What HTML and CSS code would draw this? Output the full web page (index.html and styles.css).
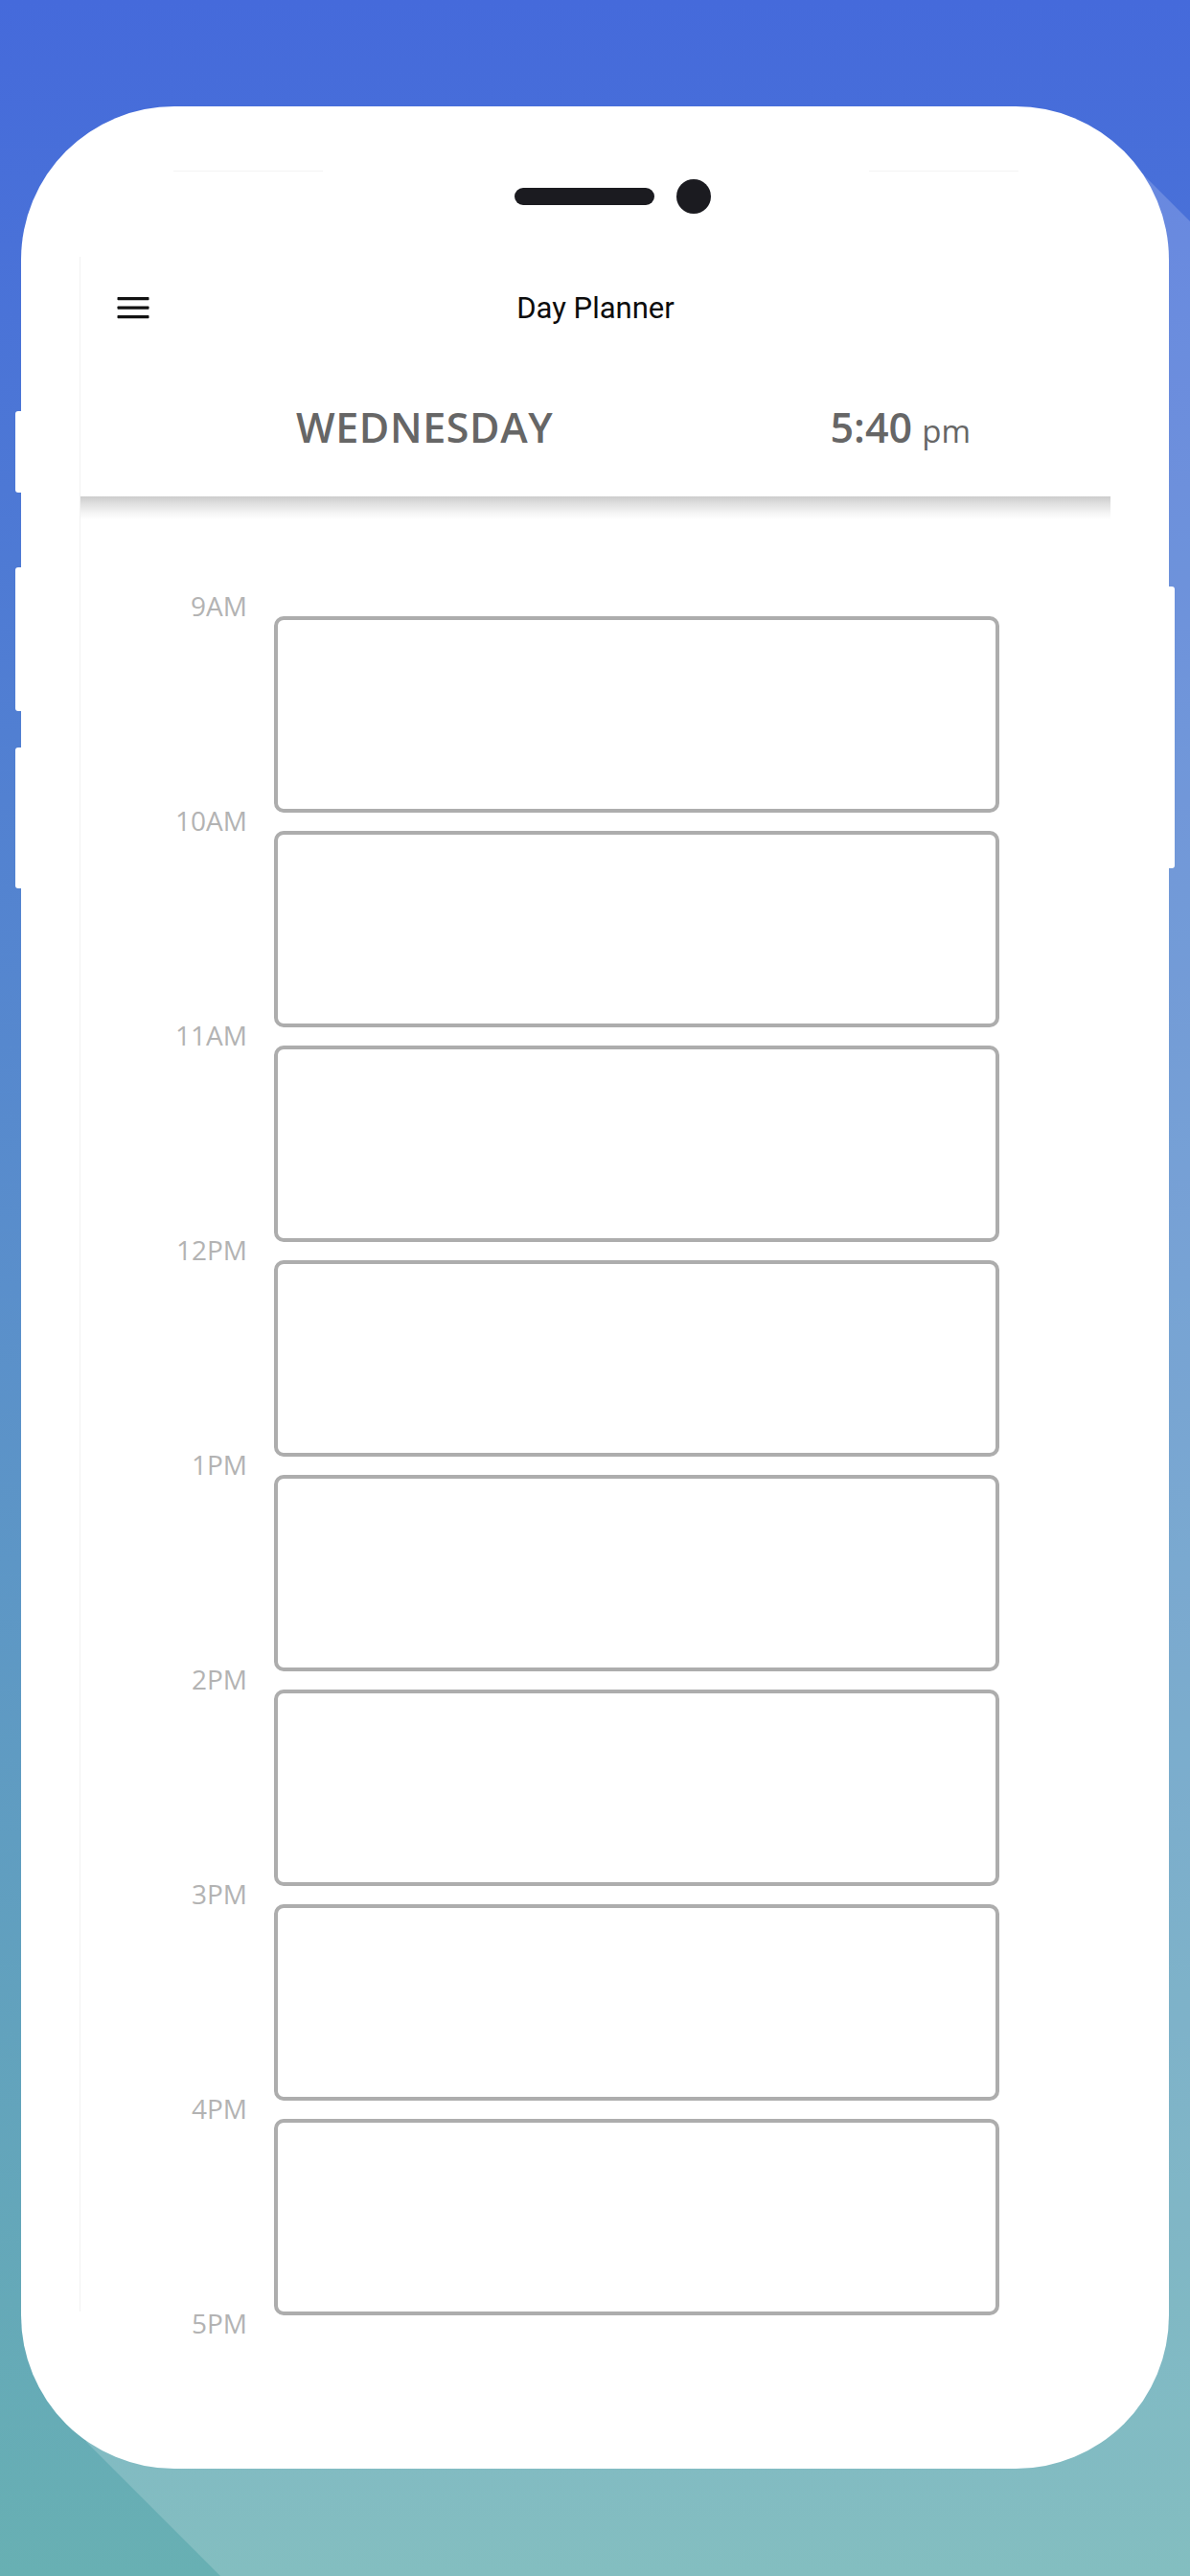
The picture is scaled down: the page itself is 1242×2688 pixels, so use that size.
FILE: index.html
```html
<!DOCTYPE html>
<html lang="en">
<head>
<meta charset="utf-8">
<title>Day Planner</title>
<link rel="stylesheet" href="styles.css">
</head>
<body>
<div class="phone">
  <span class="side-btn btn-l1"></span>
  <span class="side-btn btn-l2"></span>
  <span class="side-btn btn-l3"></span>
  <span class="side-btn btn-r1"></span>
  <div class="bezel-lines"><span></span><span></span></div>
  <div class="notch"><span class="speaker"></span><span class="camera"></span></div>
  <main class="screen">
    <header class="appbar">
      <div class="nav">
        <span class="menu">
          <svg width="34" height="24" viewBox="0 0 34 24" aria-hidden="true">
            <rect x="0.5" y="0" width="33" height="3.3" rx="0.8" fill="#111"/>
            <rect x="0.5" y="9.5" width="33" height="3.3" rx="0.8" fill="#111"/>
            <rect x="0.5" y="19" width="33" height="3.3" rx="0.8" fill="#111"/>
          </svg>
        </span>
        <h1 class="title">Day Planner</h1>
        <span class="nav-spacer"></span>
      </div>
      <div class="date-row">
        <span class="day">WEDNESDAY</span>
        <span class="time"><span class="num">5:40</span> <span class="ampm">pm</span></span>
      </div>
    </header>
    <div class="header-shadow"></div>
    <ol class="slots">
      <li class="slot"><span class="hour">9AM</span><div class="box"></div></li>
      <li class="slot"><span class="hour">10AM</span><div class="box"></div></li>
      <li class="slot"><span class="hour">11AM</span><div class="box"></div></li>
      <li class="slot"><span class="hour">12PM</span><div class="box"></div></li>
      <li class="slot"><span class="hour">1PM</span><div class="box"></div></li>
      <li class="slot"><span class="hour">2PM</span><div class="box"></div></li>
      <li class="slot"><span class="hour">3PM</span><div class="box"></div></li>
      <li class="slot"><span class="hour">4PM</span><div class="box"></div></li>
      <li class="slot"><span class="hour">5PM</span></li>
    </ol>
  </main>
</div>
</body>
</html>
```

FILE: styles.css
```css
* { box-sizing: border-box; }

html, body {
  margin: 0;
  padding: 0;
}

body {
  position: relative;
  width: 1242px;
  height: 2688px;
  overflow: hidden;
  font-family: "Open Sans", "Noto Sans", sans-serif;
  background: linear-gradient(180deg, #456adb 0%, #5a8fcb 50%, #68b0b3 100%);
}

/* lighter rotated panel behind the phone */
body::before {
  content: "";
  position: absolute;
  inset: 0;
  background: rgba(255, 255, 255, 0.18);
  clip-path: polygon(1190px 179px, 1242px 231px, 1242px 2688px, 230px 2688px, 90px 2548px);
}

.phone {
  position: relative;
  z-index: 1;
  margin: 111px 0 0 22px;
  width: 1198px;
  height: 2465px;
  padding-top: 67px;
  background: #fff;
  border-radius: 160px;
}

.side-btn {
  position: absolute;
  width: 7px;
  background: #fff;
}
.btn-l1, .btn-l2, .btn-l3 { left: -6px; border-radius: 3px 0 0 3px; }
.btn-l1 { top: 318px; height: 85px; }
.btn-l2 { top: 481px; height: 150px; }
.btn-l3 { top: 669px; height: 147px; }
.btn-r1 { right: -6px; top: 501px; height: 294px; border-radius: 0 3px 3px 0; }

.bezel-lines {
  display: flex;
  gap: 570px;
  height: 1px;
  padding-left: 159px;
}
.bezel-lines span {
  width: 156px;
  height: 1px;
  background: #f4f4f4;
}

.notch {
  display: flex;
  align-items: center;
  gap: 23px;
  height: 36px;
  margin-top: 8px;
  padding-left: 515px;
}
.speaker {
  width: 146px;
  height: 18px;
  border-radius: 9px;
  background: #1b1b20;
}
.camera {
  width: 36px;
  height: 36px;
  border-radius: 50%;
  background: #1b1b20;
}

.screen {
  display: block;
  margin: 45px 0 0 61px;
  width: 1076px;
  height: 2144px;
  border-left: 1px solid #f2f2f2;
}

.nav {
  display: grid;
  grid-template-columns: 1fr auto 1fr;
  align-items: center;
  height: 108px;
}
.menu {
  display: flex;
  padding-left: 38px;
}
.menu svg { display: block; }
.title {
  margin: 0;
  font-family: Roboto, "Noto Sans", sans-serif;
  font-weight: 400;
  font-size: 31px;
  line-height: 108px;
  color: #0c0c0c;
}

.date-row {
  display: flex;
  justify-content: space-between;
  align-items: flex-start;
  height: 142px;
  padding: 40px 146px 0 225px;
  font-size: 43px;
  line-height: 60px;
  color: #666;
}
.day {
  font-weight: 600;
  letter-spacing: 0.6px;
}
.time {
  white-space: nowrap;
  word-spacing: -1px;
}
.num {
  font-weight: 600;
}
.ampm {
  font-size: 33px;
  font-weight: 400;
  line-height: 1;
}

.header-shadow {
  height: 24px;
  background: linear-gradient(180deg, #cccccc 0%, #e1e1e1 35%, #f6f6f6 75%, #fff 100%);
}

.slots {
  list-style: none;
  margin: 0;
  padding: 101px 0 0 0;
  display: flex;
  flex-direction: column;
  gap: 19px;
}

.slot {
  display: grid;
  grid-template-columns: 174px 757px;
  column-gap: 28px;
  align-items: start;
}

.hour {
  margin-top: -25px;
  text-align: right;
  font-size: 28px;
  line-height: 28px;
  color: #b3b3b3;
}

.box {
  height: 205px;
  border: 4px solid #adadad;
  border-radius: 10px;
}
```
